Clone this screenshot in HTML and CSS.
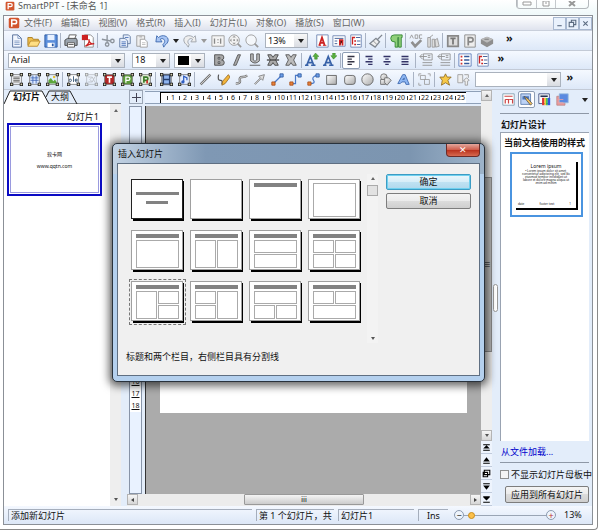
FILE: index.html
```
<!DOCTYPE html>
<html lang="zh-CN">
<head>
    <meta charset="UTF-8">
    <meta name="viewport" content="width=device-width, initial-scale=1.0">
    <title>SmartPPT - [未命名 1]</title>
    <link rel="stylesheet" href="styles.css">
</head>
<body>
    <svg class="sprite" aria-hidden="true">
        <defs>
            <linearGradient id="grey" x1="0" y1="0" x2="1" y2="1"><stop offset="0" stop-color="#fff"/><stop offset="1" stop-color="#aaa"/></linearGradient>
        </defs>
        <!-- window buttons -->
        <symbol id="win-min" viewBox="0 0 10 6"><path d="M1 1h8v3H1z" fill="#fff" stroke="#999"/></symbol>
        <symbol id="win-max" viewBox="0 0 10 6"><path d="M2 0h6v5H2zM4 2h2" fill="#fff" stroke="#999"/></symbol>
        <symbol id="win-close" viewBox="0 0 10 6"><path d="M2 0l6 5M8 0L2 5" stroke="#999" stroke-width="2"/></symbol>
        <symbol id="doc-min" viewBox="0 0 10 10"><path d="M3 7h4" stroke="#5b6b80"/></symbol>
        <symbol id="doc-max" viewBox="0 0 10 10"><path d="M4 4V2h4v4H6M2 4h4v4H2z" fill="none" stroke="#5b6b80"/></symbol>
        <symbol id="doc-close" viewBox="0 0 10 10"><path d="M3 3l4 4M7 3L3 7" stroke="#5b6b80"/></symbol>
        <!-- file toolbar -->
        <symbol id="logo" viewBox="0 0 16 16"><rect x="1" y="1" width="14" height="14" rx="2" fill="#d2552d"/><path d="M5 13V4h4a2.500 2.500 0 0 1 0 5H6" fill="none" stroke="#fff" stroke-width="2"/></symbol>
        <symbol id="new" viewBox="0 0 16 16"><path d="M3 1h6l4 4v10H3z" fill="#f4f8ff" stroke="#4a6490"/><path d="M9 1v4h4M5 8h6M5 10h6M5 12h6" fill="none" stroke="#7c96c0"/></symbol>
        <symbol id="open" viewBox="0 0 16 16"><path d="M1 13V4h5l1 2h6v2" fill="#f0c050" stroke="#a87a1c"/><path d="M1 14l3-6h11l-3 6z" fill="#ffdf85" stroke="#b8872a"/></symbol>
        <symbol id="save" viewBox="0 0 16 16"><path d="M1 1h14v14H1z" fill="#5b8fdc" stroke="#28569f"/><path d="M4 1h8v6H4z" fill="#e8f1ff"/><path d="M4 10h8v5H4z" fill="#fff"/><path d="M9 11h2v3H9z" fill="#28569f"/></symbol>
        <symbol id="print" viewBox="0 0 16 16"><path d="M5 6l1-5h8l-2 5" fill="#fff" stroke="#555"/><path d="M1 7l3-2h10l1 2v6H1z" fill="#9aa4ae" stroke="#444"/><path d="M4 10h8v5H4z" fill="#fff" stroke="#555"/><path d="M5 12h6" stroke="#555"/></symbol>
        <symbol id="pdf" viewBox="0 0 16 16"><path d="M4 1h7l3 3v11H4z" fill="#fff" stroke="#888"/><rect x="1" y="1" width="7" height="6" fill="#c22"/><path d="M5 14c3-2 5-5 4-8 0 4 3 6 6 5-4 0-7 1-10 3z" fill="none" stroke="#c22" stroke-width="1.500"/></symbol>
        <symbol id="cut" viewBox="0 0 16 16"><g fill="none" stroke="#8d949c" stroke-width="1.500"><path d="M7 1v9M1 6l10 2"/><circle cx="7" cy="12" r="2"/><circle cx="13" cy="8" r="2"/></g></symbol>
        <symbol id="copy" viewBox="0 0 16 16"><g fill="#e6eefb" stroke="#5f789f"><path d="M6 1h6l2 2v8H6z"/><path d="M2 5h6l3 3v7H2z"/></g><path d="M4 9h5M4 11h5M4 13h5M8 4h4" stroke="#4d74b8"/></symbol>
        <symbol id="paste" viewBox="0 0 16 16"><path d="M2 2h9v12H2z" fill="#eee" stroke="#999"/><path d="M5 1h3v3H5z" fill="#bbb"/><path d="M6 6h5l3 3v6H6z" fill="#fff" stroke="#999"/><path d="M8 10h4M8 12h4" stroke="#bbb"/></symbol>
        <symbol id="undo" viewBox="0 0 16 16"><path d="M1 9l1-7 2 2c4-4 12-2 11 4-1 4-4 4-5 7l-1-3c2-2 3-4 1-6-1-1-3-1-4 0l2 3z" fill="#a9c6f4" stroke="#3a66ac"/></symbol>
        <symbol id="redo" viewBox="0 0 16 16"><path d="M15 9l-1-7-2 2C8 0 0 2 1 8c1 4 4 4 5 7l1-3C5 10 5 8 7 6c1-1 3-1 4 0L9 9z" fill="#eee" stroke="#9aa0a8"/></symbol>
        <symbol id="one" viewBox="0 0 16 16"><path d="M1 2h14v12H1z" fill="#f4f4f4" stroke="#999"/><path d="M4 5v6M11 5v6M8 6v1M8 9v1" stroke="#888" stroke-width="1.500"/></symbol>
        <symbol id="fit" viewBox="0 0 16 16"><circle cx="7" cy="7" r="6" fill="#f2f2f2" stroke="#999"/><path d="M7 2l2 2H5zM7 12l2-2H5zM2 7l2-2v4zM12 7l-2-2v4z" fill="#999"/><path d="M6 6h2v2H6z" fill="#999"/><path d="M11 11l4 4" stroke="#999" stroke-width="2"/></symbol>
        <symbol id="zoom" viewBox="0 0 16 16"><circle cx="7" cy="7" r="6" fill="#f4f7fb" stroke="#999"/><path d="M11 11l4 4" stroke="#999" stroke-width="2"/></symbol>
        <symbol id="char" viewBox="0 0 16 16"><path d="M2 1h13v14H2z" fill="#fff" stroke="#6e86b4"/><path d="M4 13h3M9 13h4" stroke="#c22"/><path d="M5 13L8 4l3 9M6 10h5" fill="none" stroke="#c22" stroke-width="2"/></symbol>
        <symbol id="para" viewBox="0 0 16 16"><path d="M1 2h14v12H1z" fill="#fff" stroke="#6e86b4"/><path d="M3 5h10M3 8h3M3 11h3" stroke="#35538f"/><path d="M9 13V7h4M12 7v6M8 8h2" stroke="#c22" stroke-width="2"/></symbol>
        <symbol id="outline" viewBox="0 0 16 16"><path d="M2 1h12v14H2z" fill="#fff" stroke="#6e86b4"/><path d="M4 3v9M4 4h3M6 8h2M6 12h2" stroke="#c22" stroke-width="1.500"/><path d="M8 4h5M9 8h4M9 12h4" stroke="#35538f"/></symbol>
        <symbol id="brush" viewBox="0 0 16 16"><path d="M15 1l-5 5M8 5l4 4-5 6-6-4z" fill="#eee" stroke="#7f868e" stroke-width="1.500"/><path d="M5 8l4 4" stroke="#888"/></symbol>
        <symbol id="pilcrow" viewBox="0 0 16 16"><path d="M15 1H6a4 4 0 0 0 0 8h1v6h3V4h1v11h3V4h1z" fill="#8fd07a" stroke="#2f8430"/></symbol>
        <symbol id="spell" viewBox="0 0 16 16"><path d="M1 5l2-4 2 4M7 1v4h3V1H7M15 1h-3v4h3" fill="none" stroke="#999"/><path d="M3 9l4 5 7-7" fill="none" stroke="#8f8f8f" stroke-width="3"/></symbol>
        <symbol id="book" viewBox="0 0 16 16"><path d="M2 4h3v11H2zM7 6h3v9H7zM10 7l3-2 2 9-4 1zM4 4l4-3" fill="#ddd" stroke="#999"/></symbol>
        <symbol id="boxt" viewBox="0 0 16 16"><path d="M2 2h12v12H2z" fill="#ddd" stroke="#888" stroke-width="2"/><path d="M5 5h6M8 5v7" stroke="#777" stroke-width="2"/></symbol>
        <symbol id="boxp" viewBox="0 0 16 16"><path d="M2 1h12v14H2z" fill="#eee" stroke="#888"/><path d="M6 13V4h3a2 2 0 0 1 0 5H6" fill="none" stroke="#888" stroke-width="2"/></symbol>
        <symbol id="cube" viewBox="0 0 16 16"><path d="M1 6l7-3 7 3v5l-7 4-7-4z" fill="#8e8e8e"/><path d="M1 6l7 4 7-4-7-3z" fill="#bbb"/><path d="M5 6h5" stroke="#777"/></symbol>
        <!-- text toolbar -->
        <symbol id="bold" viewBox="0 0 16 16"><path d="M3 2h7a3 3 0 0 1 1 6 3 3 0 0 1 0 6H3zM7 5v2h2V5zM7 10v2h2v-2z" fill="#a8a8a8" stroke="#4c4c4c" fill-rule="evenodd"/></symbol>
        <symbol id="italic" viewBox="0 0 16 16"><path d="M9 2h3L7 14H4z" fill="#aaa" stroke="#555"/></symbol>
        <symbol id="under" viewBox="0 0 16 16"><path d="M3 1h3v7q2 3 4 0V1h3v8q-5 5-10 0zM2 14h12" fill="#bbb" stroke="#555"/></symbol>
        <symbol id="strike" viewBox="0 0 16 16"><path d="M2 2h4l2 3 2-3h4l-3 6 3 6h-4l-2-3-2 3H2l3-6z" fill="#aaa" stroke="#444"/><path d="M1 8h14" stroke="#444" stroke-width="1.500"/></symbol>
        <symbol id="shadow" viewBox="0 0 16 16"><path d="M2 2h4l2 3 2-3h4l-3 6 3 6h-4l-2-3-2 3H2l3-6z" fill="#bbb" stroke="#555"/></symbol>
        <symbol id="grow" viewBox="0 0 16 16"><path d="M2 14L6 4l4 10M4 11h5" fill="none" stroke="#3862a8" stroke-width="2"/><path d="M0 14h4M7 14h5" stroke="#3862a8" stroke-width="1.500"/><path d="M9 4l3-4 4 4h-2v3h-3V4z" fill="#58b03c" stroke="#2f7a20" stroke-width=".5"/></symbol>
        <symbol id="shrink" viewBox="0 0 16 16"><path d="M2 14L6 4l4 10M4 11h5" fill="none" stroke="#3862a8" stroke-width="2"/><path d="M0 14h4M7 14h5" stroke="#3862a8" stroke-width="1.500"/><path d="M9 3l3 4 4-4h-2V0h-3v3z" fill="#58b03c" stroke="#2f7a20" stroke-width=".5"/></symbol>
        <symbol id="left" viewBox="0 0 16 16"><path d="M4 4h8M4 7h5M4 10h8M4 13h5" stroke="#334" stroke-width="1.500"/></symbol>
        <symbol id="right" viewBox="0 0 16 16"><path d="M4 4h8M7 7h5M4 10h8M7 13h5" stroke="#336" stroke-width="1.500"/></symbol>
        <symbol id="center" viewBox="0 0 16 16"><path d="M4 4h8M6 7h4M4 10h8M6 13h4" stroke="#336" stroke-width="1.500"/></symbol>
        <symbol id="justify" viewBox="0 0 16 16"><path d="M4 4h8M4 7h8M4 10h8M4 13h8" stroke="#336" stroke-width="1.500"/></symbol>
        <symbol id="indent" viewBox="0 0 16 16"><path d="M5 1h10v7H5zM4 11h11M4 14h11M10 3h3M10 5h3M1 4h8M4 1L1 4l3 3" fill="none" stroke="#909090"/></symbol>
        <symbol id="list" viewBox="0 0 16 16"><path d="M1 1h14v14H1z" fill="#fff" stroke="#5b7cba"/><path d="M3 4h2M3 8h2M3 12h2" stroke="#c33" stroke-width="2"/><path d="M7 4h6M7 8h6M7 12h6" stroke="#345a9c" stroke-width="1.500"/></symbol>
        <!-- object toolbar -->
        <symbol id="handles" viewBox="0 0 16 16"><path d="M2 2h12v12H2z" fill="none" stroke="#777"/><path d="M0 0h4v4H0zM12 0h4v4h-4zM0 12h4v4H0zM12 12h4v4h-4z" fill="#1a1a1a"/><path d="M1 1h2v2H1zM13 1h2v2h-2zM1 13h2v2H1zM13 13h2v2h-2z" fill="#d6d0b0"/></symbol>
        <symbol id="obj-text" viewBox="0 0 16 16"><path d="M3 3h10v10H3z" fill="#fff"/><path d="M4 5h8M4 7h8M4 9h8M4 11h8" stroke="#444"/><use href="#handles"/></symbol>
        <symbol id="obj-table" viewBox="0 0 16 16"><path d="M3 3h10v10H3z" fill="#dce9ff"/><path d="M3 6h10M3 9h10M6 3v10M10 3v10" stroke="#3b62b4"/><use href="#handles"/></symbol>
        <symbol id="obj-pic" viewBox="0 0 16 16"><path d="M3 3h10v10H3z" fill="#dff0ff"/><path d="M3 13V9l3-3 3 4 2-2 2 3v2z" fill="#5da63c"/><circle cx="10" cy="5" r="1.500" fill="#e9c034"/><use href="#handles"/></symbol>
        <symbol id="obj-ole" viewBox="0 0 16 16"><path d="M2 2h12v12H2z" fill="#fff"/><circle cx="4" cy="9" r="1.500" fill="none" stroke="#246"/><path d="M8 4v7M10 9h3q-1-3-3-1 0 4 3 3" fill="none" stroke="#246"/><use href="#handles"/></symbol>
        <symbol id="obj-off" viewBox="0 0 16 16"><g opacity=".4"><path d="M4 5h5l-3 3 3 3H4M9 5l3 6M12 5l-3 6" fill="none" stroke="#777"/><use href="#handles"/></g></symbol>
        <symbol id="obj-t" viewBox="0 0 16 16"><path d="M2 2h12v12H2z" fill="#b32626"/><path d="M5 5h6M8 5v7" stroke="#fff" stroke-width="2"/><use href="#handles"/></symbol>
        <symbol id="obj-p" viewBox="0 0 16 16"><path d="M2 2h12v12H2z" fill="#5c9a3a"/><path d="M6 12V5h3a2 2 0 0 1 0 4H6" fill="none" stroke="#fff" stroke-width="1.500"/><use href="#handles"/></symbol>
        <symbol id="obj-f" viewBox="0 0 16 16"><path d="M2 2h12v12H2z" fill="#e5f1d8"/><path d="M6 12V5h3a2 2 0 0 1 0 4H6" fill="none" stroke="#397a28" stroke-width="2"/><path d="M10 9v4" stroke="#c22" stroke-width="2"/><use href="#handles"/></symbol>
        <symbol id="obj-film" viewBox="0 0 16 16"><path d="M3 1h10v14H3z" fill="#28406e"/><path d="M5 3h6v4H5zM5 9h6v4H5z" fill="#8fb4f0"/><use href="#handles"/></symbol>
        <symbol id="obj-note" viewBox="0 0 16 16"><path d="M2 2h12v12H2z" fill="#e4edff"/><path d="M7 11V4l4 2v3" fill="none" stroke="#2d5cc0" stroke-width="1.500"/><circle cx="6" cy="11" r="2" fill="#2d5cc0"/><use href="#handles"/></symbol>
        <symbol id="line" viewBox="0 0 16 16"><path d="M2 14L14 2" stroke="#777" stroke-width="3"/><path d="M2 14L14 2" stroke="#ddd"/></symbol>
        <symbol id="pencil" viewBox="0 0 16 16"><path d="M2 2q-2 8 3 7 2 0 1 5" fill="none" stroke="#555" stroke-width="1.500"/><path d="M14 2L7 10l-1 5 4-2 6-8z" fill="#f3b53a" stroke="#98681a"/></symbol>
        <symbol id="curve" viewBox="0 0 16 16"><path d="M1 13q6 0 5-4t3-4 6-2" fill="none" stroke="#777" stroke-width="3"/><path d="M1 13q6 0 5-4t3-4 6-2" fill="none" stroke="#ddd"/></symbol>
        <symbol id="arrow" viewBox="0 0 16 16"><path d="M2 13l7-7-2-2 7-2-2 7-2-2-7 7z" fill="#ddd" stroke="#777"/></symbol>
        <symbol id="conn" viewBox="0 0 16 16"><path d="M4 12l8-8" stroke="#4a7ac8" stroke-width="1.500"/><path d="M1 11h4v4H1z" fill="#e8823c" stroke="#a64c15"/><path d="M11 1h4v4h-4z" fill="#6fa0ea" stroke="#2c589e"/></symbol>
        <symbol id="conn2" viewBox="0 0 16 16"><path d="M4 13h4V3h4" fill="none" stroke="#4a7ac8" stroke-width="1.500"/><path d="M1 11h4v4H1z" fill="#e8823c" stroke="#a64c15"/><path d="M11 1h4v4h-4z" fill="#6fa0ea" stroke="#2c589e"/></symbol>
        <symbol id="conn3" viewBox="0 0 16 16"><path d="M4 13q7 0 4-4T12 3" fill="none" stroke="#4a7ac8" stroke-width="1.500"/><path d="M1 11h4v4H1z" fill="#e8823c" stroke="#a64c15"/><path d="M11 1h4v4h-4z" fill="#6fa0ea" stroke="#2c589e"/></symbol>
        <symbol id="rect" viewBox="0 0 16 16"><path d="M2 3h12v11H2z" fill="url(#grey)" stroke="#555"/></symbol>
        <symbol id="round" viewBox="0 0 16 16"><rect x="2" y="3" width="13" height="11" rx="3" fill="url(#grey)" stroke="#555"/></symbol>
        <symbol id="oval" viewBox="0 0 16 16"><circle cx="8" cy="8" r="7" fill="url(#grey)" stroke="#555"/></symbol>
        <symbol id="shapes" viewBox="0 0 16 16"><g fill="url(#grey)" stroke="#666"><circle cx="6" cy="5" r="4"/><path d="M2 8h6v6H2z"/><path d="M7 6h5l3 3-5 6-3-3z"/></g></symbol>
        <symbol id="art" viewBox="0 0 16 16"><path d="M1 13L7 2h3l5 12h-4l-1-3H6l-2 2zM7 8h2V6z" fill="#8db6f2" stroke="#3763ab" fill-rule="evenodd"/></symbol>
        <symbol id="group" viewBox="0 0 16 16"><path d="M3 3h6v5H3zM8 8h6v6H8zM1 1v3M1 1h3M12 1h3v3M1 12v3h3" fill="none" stroke="#999"/></symbol>
        <symbol id="star" viewBox="0 0 16 16"><path d="M8 1l2 4 5 0-4 4 2 6-5-3-5 3 1-6-3-4 5 0z" fill="#f7c948" stroke="#8b6720"/></symbol>
        <symbol id="trans" viewBox="0 0 16 16"><path d="M1 2h6v10H1zM9 2h5v4M9 8l3-2 3 3-2 1v5h-3v-5H8z" fill="#eee" stroke="#999"/></symbol>
        <!-- task pane -->
        <symbol id="pane-layout" viewBox="0 0 16 16"><path d="M1 1h14v14H1z" fill="#fff" stroke="#79a"/><path d="M3 4h10M4 8h4v5M4 8v5M9 8h4v5" fill="none" stroke="#c44" stroke-width="1.500"/></symbol>
        <symbol id="pane-design" viewBox="0 0 16 16"><path d="M1 1h12v13H1z" fill="#bcd2f5" stroke="#57a"/><path d="M3 4h8v4H3z" fill="#4774be"/><path d="M5 4l5 3 5 6-2 2-5-6z" fill="#f0c060" stroke="#555"/></symbol>
        <symbol id="pane-color" viewBox="0 0 16 16"><path d="M1 1h13v12H1z" fill="#fff" stroke="#347"/><path d="M3 4h9" stroke="#235" stroke-width="2"/><path d="M5 6h3v9H5z" fill="#d33"/><path d="M8 6h2v9H8z" fill="#ec3"/><path d="M10 6h2v9h-2z" fill="#3b4"/><path d="M12 6h3v9h-3z" fill="#35d"/></symbol>
        <symbol id="pane-effect" viewBox="0 0 16 16"><path d="M1 4h10v11H1z" fill="#e99" stroke="#b88"/><path d="M4 1h11v11H4z" fill="#5c8ae0" stroke="#9bd"/><path d="M2 8h7M2 12h7" stroke="#e9a0a8"/></symbol>
        <!-- page navigation -->
        <symbol id="first" viewBox="0 0 10 10"><path d="M2 2h6v1H2zM5 3l3 3H2zM2 7h6v1H2z"/></symbol>
        <symbol id="prev" viewBox="0 0 10 10"><path d="M5 2l3 4H2zM2 7h6v1H2z"/></symbol>
        <symbol id="pages" viewBox="0 0 10 10"><path d="M3 2h5v4H3zM2 4h4v4H2z" fill="#fff" stroke="#000"/></symbol>
        <symbol id="next" viewBox="0 0 10 10"><path d="M2 2h6v1H2zM2 4h6L5 8z"/></symbol>
        <symbol id="last" viewBox="0 0 10 10"><path d="M2 2h6v1H2zM2 3h6L5 6zM2 7h6v1H2z"/></symbol>
    </svg>

    <div class="frame">
        <header class="titlebar">
            <svg class="logo"><use href="#logo"/></svg>
            <span class="title">SmartPPT - [未命名 1]</span>
            <div class="window-btns"><button aria-label="最小化"><svg><use href="#win-min"/></svg></button><button aria-label="最大化"><svg><use href="#win-max"/></svg></button><button class="wide" aria-label="关闭"><svg><use href="#win-close"/></svg></button></div>
        </header>

        <div class="window">
            <nav class="menu">
                <svg class="logo"><use href="#logo"/></svg>
                <a href="#">文件(F)</a><a href="#">编辑(E)</a><a href="#">视图(V)</a><a href="#">格式(R)</a><a href="#">插入(I)</a><a href="#">幻灯片(L)</a><a href="#">对象(O)</a><a href="#">播放(S)</a><a href="#">窗口(W)</a>
                <div class="doc-btns"><button aria-label="最小化文档"><svg><use href="#doc-min"/></svg></button><button aria-label="还原文档"><svg><use href="#doc-max"/></svg></button><button aria-label="关闭文档"><svg><use href="#doc-close"/></svg></button></div>
            </nav>

            <div class="toolbar file-bar">
                <button><svg><use href="#new"/></svg></button><button><svg><use href="#open"/></svg></button><button><svg><use href="#save"/></svg></button>
                <i></i>
                <button><svg><use href="#print"/></svg></button><button><svg><use href="#pdf"/></svg></button>
                <i></i>
                <button><svg><use href="#cut"/></svg></button><button><svg><use href="#copy"/></svg></button><button><svg><use href="#paste"/></svg></button>
                <i class="blank"></i>
                <button><svg><use href="#undo"/></svg></button><button class="drop" aria-label="撤销列表"></button><button><svg><use href="#redo"/></svg></button><button class="drop off" aria-label="重做列表"></button>
                <button><svg><use href="#one"/></svg></button><button><svg><use href="#fit"/></svg></button><button><svg><use href="#zoom"/></svg></button>
                <span class="combo zoom-box"><select aria-label="缩放"><option>13%</option></select></span>
                <button><svg><use href="#char"/></svg></button><button><svg><use href="#para"/></svg></button><button><svg><use href="#outline"/></svg></button>
                <i></i>
                <button><svg><use href="#brush"/></svg></button>
                <i></i>
                <button><svg><use href="#pilcrow"/></svg></button>
                <i></i>
                <button><svg><use href="#spell"/></svg></button><button><svg><use href="#book"/></svg></button>
                <i></i>
                <button><svg><use href="#boxt"/></svg></button><button><svg><use href="#boxp"/></svg></button><button><svg><use href="#cube"/></svg></button>
                <button class="more">»</button>
            </div>

            <div class="toolbar text-bar">
                <span class="combo font-box"><select aria-label="字体"><option>Arial</option></select></span>
                <span class="combo size-box"><select aria-label="字号"><option>18</option></select></span>
                <span class="combo color-box"><select aria-label="颜色"><option></option></select></span>
                <button><svg><use href="#bold"/></svg></button><button><svg><use href="#italic"/></svg></button><button><svg><use href="#under"/></svg></button><button><svg><use href="#strike"/></svg></button><button><svg><use href="#shadow"/></svg></button>
                <i></i>
                <button><svg><use href="#grow"/></svg></button><button><svg><use href="#shrink"/></svg></button>
                <i></i>
                <button class="on"><svg><use href="#left"/></svg></button><button><svg><use href="#right"/></svg></button><button><svg><use href="#center"/></svg></button><button><svg><use href="#justify"/></svg></button>
                <i></i>
                <button><svg><use href="#indent"/></svg></button><button><svg><use href="#indent"/></svg></button>
                <i></i>
                <button><svg><use href="#list"/></svg></button><button><svg><use href="#outline"/></svg></button>
                <button class="more">»</button>
            </div>

            <div class="toolbar object-bar">
                <button><svg><use href="#obj-text"/></svg></button><button><svg><use href="#obj-table"/></svg></button><button><svg><use href="#obj-pic"/></svg></button>
                <i></i>
                <button><svg><use href="#obj-ole"/></svg></button><button><svg><use href="#obj-off"/></svg></button><button><svg><use href="#obj-t"/></svg></button><button><svg><use href="#obj-p"/></svg></button><button><svg><use href="#obj-f"/></svg></button>
                <i></i>
                <button><svg><use href="#obj-film"/></svg></button><button><svg><use href="#obj-note"/></svg></button>
                <i></i>
                <button><svg><use href="#line"/></svg></button><button><svg><use href="#pencil"/></svg></button><button><svg><use href="#curve"/></svg></button><button><svg><use href="#arrow"/></svg></button><button><svg><use href="#conn"/></svg></button><button><svg><use href="#conn2"/></svg></button><button><svg><use href="#conn3"/></svg></button><button><svg><use href="#rect"/></svg></button><button><svg><use href="#round"/></svg></button><button><svg><use href="#oval"/></svg></button><button><svg><use href="#shapes"/></svg></button><button><svg><use href="#art"/></svg></button>
                <i></i>
                <button><svg><use href="#group"/></svg></button>
                <i></i>
                <button><svg><use href="#star"/></svg></button><button><svg><use href="#trans"/></svg></button>
                <span class="combo anim-box"><select aria-label="动画"><option></option></select></span>
                <button class="more">»</button>
            </div>

            <main class="main">
                <aside class="slides">
                    <div class="tabs">
                        <svg viewBox="0 0 117 14" preserveAspectRatio="xMinYMin meet"><path d="M0 14L6 1h32l7 13z" fill="#fff"/><path d="M0 14L6 1h32l7 13H117M42 7l3-6h21l7 13" fill="none" stroke="#222"/></svg>
                        <button class="tab active">幻灯片</button><button class="tab">大纲</button>
                    </div>
                    <div class="slide-list">
                        <div class="slide-items">
                            <div class="slide-name">幻灯片1</div>
                            <div class="slide-thumb"><p>软卡网</p><p>www.qqtn.com</p></div>
                        </div>
                        <div class="vscroll flat"><span class="up"></span><span class="down"></span></div>
                    </div>
                </aside>

                <section class="editor">
                    <div class="corner"></div>
                    <div class="hruler"><div class="numbers" id="hnumbers"></div></div>
                    <div class="vruler"><div class="numbers" id="vnumbers"></div></div>
                    <div class="canvas"><div class="page"></div></div>
                    <div class="side">
                        <div class="vscroll"><button class="up" aria-label="向上"></button><div class="track"><span class="thumb">≡</span></div><button class="down" aria-label="向下"></button></div>
                        <div class="nav">
                            <button><svg><use href="#first"/></svg></button><button><svg><use href="#prev"/></svg></button><button><svg><use href="#pages"/></svg></button><button><svg><use href="#next"/></svg></button><button><svg><use href="#last"/></svg></button>
                        </div>
                    </div>
                    <div class="hscroll"><button class="back" aria-label="向左"></button><div class="track"><span class="thumb">ⅲ</span></div><button class="forward" aria-label="向右"></button></div>
                </section>

                <div class="splitter"><span></span></div>

                <aside class="pane">
                    <div class="pane-icons">
                        <button><svg><use href="#pane-layout"/></svg></button><button class="on"><svg><use href="#pane-design"/></svg></button><button><svg><use href="#pane-color"/></svg></button><button><svg><use href="#pane-effect"/></svg></button>
                        <button class="drop" aria-label="更多"></button>
                    </div>
                    <h2>幻灯片设计</h2>
                    <div class="styles-box">
                        <h3>当前文档使用的样式</h3>
                        <div class="style-thumb">
                            <div class="sheet">
                                <b>Lorem ipsum</b>
                                <p>• Lorem ipsum dolor sit amet, consectetur adipiscing elit, sed do eiusmod tempor incididunt ut labore et dolore magna aliqua ut enim ad minim</p>
                                <footer><span>date</span><span>footer text</span><span>1</span></footer>
                            </div>
                        </div>
                    </div>
                    <a class="load" href="#">从文件加载...</a>
                    <div class="check"><input type="checkbox" id="hideBg"><label for="hideBg">不显示幻灯片母板中的</label></div>
                    <button class="apply">应用到所有幻灯片</button>
                </aside>
            </main>

            <footer class="status">
                <span class="cell hint">添加新幻灯片</span>
                <span class="cell count">第 1 个幻灯片，共</span>
                <span class="cell name">幻灯片1</span>
                <span class="cell ins">Ins</span>
                <div class="zoom">
                    <button aria-label="缩小">−</button>
                    <input type="range" aria-label="缩放比例" min="0" max="100" value="5">
                    <button class="plus" aria-label="放大">+</button>
                </div>
                <span class="percent">13%</span>
            </footer>
        </div>
    </div>

    <div class="dialog" role="dialog" aria-labelledby="dialogTitle">
        <div class="dialog-title"><span id="dialogTitle">插入幻灯片</span><button class="close" aria-label="关闭">✕</button></div>
        <div class="dialog-body">
            <div class="layouts" id="layouts"></div>
            <div class="vscroll dialog-scroll"><span class="up"></span><span class="thumb"></span><span class="down"></span></div>
            <div class="actions">
                <button class="ok">确定</button>
                <button>取消</button>
            </div>
            <p class="desc">标题和两个栏目，右侧栏目具有分割线</p>
        </div>
    </div>

    <script src="script.js"></script>
</body>
</html>
```
FILE: script.js
```
// title bar and the placeholder boxes of a layout: [x, y, width, height]
const TITLE = [5, 4, 43, 4];
const FULL = [5, 10, 42, 27];
const L = [5, 10, 20, 27], R = [27, 10, 20, 27];
const T = [5, 10, 42, 12], B = [5, 24, 42, 13];
const TL = [5, 10, 20, 12], TR = [27, 10, 20, 12];
const BL = [5, 24, 20, 13], BR = [27, 24, 20, 13];

const layouts = [
    { bars: [[5, 13, 43, 3], [15, 22, 22, 3]], boxes: [], dark: true },
    { bars: [], boxes: [] },
    { bars: [TITLE], boxes: [] },
    { bars: [], boxes: [[5, 4, 42, 33]] },
    { bars: [TITLE], boxes: [FULL] },
    { bars: [TITLE], boxes: [L, R] },
    { bars: [TITLE], boxes: [T, B] },
    { bars: [TITLE], boxes: [TL, TR, BL, BR] },
    { bars: [TITLE], boxes: [L, TR, BR], selected: true },
    { bars: [TITLE], boxes: [TL, BL, R] },
    { bars: [TITLE], boxes: [T, BL, BR] },
    { bars: [TITLE], boxes: [TL, TR, B] }
];

function rect(r, cls) {
    return `<rect class="${cls}" x="${r[0]}" y="${r[1]}" width="${r[2]}" height="${r[3]}"/>`;
}

document.getElementById('layouts').innerHTML = layouts.map((item, i) => `
    <button class="layout ${item.selected ? 'selected' : ''}" aria-label="版式 ${i + 1}">
        <svg viewBox="0 0 53 42">
            ${rect([2, 2, 51, 40], 'shade')}
            ${rect([0, 0, 52, 40], item.dark ? 'edge dark' : 'edge')}
            ${rect([1, 1, 50, 38], 'paper')}
            ${item.bars.map(r => rect(r, 'bar')).join('')}
            <g transform="translate(.5 .5)">${item.boxes.map(r => rect(r, 'box')).join('')}</g>
        </svg>
    </button>`).join('');

function numbers(id, count) {
    let html = '';
    for (let i = 1; i <= count; i++) html += `<span>${i}</span>`;
    document.getElementById(id).innerHTML = html;
}

numbers('hnumbers', 25);
numbers('vnumbers', 18);
```
FILE: styles.css
```
* {
    box-sizing: border-box;
}
body {
    margin: 0;
    position: relative;
    background: #fff;
    color: #111;
    font: 9px/12px "Noto Sans", "Noto Sans CJK SC", sans-serif;
    overflow: hidden;
}
button, select, input {
    font: inherit;
    color: inherit;
    margin: 0;
    padding: 0;
}
button {
    border: 0;
    background: none;
}
h2, h3, p {
    margin: 0;
    font-size: 9px;
}
.sprite {
    position: absolute;
    width: 0;
    height: 0;
}
.frame {
    display: flex;
    flex-direction: column;
    min-height: calc(100vh - 1px);
    margin-right: 3px;
    padding: 0 4px 4px 3px;
    border: solid #8a8a8a;
    border-width: 0 1px 1px 0;
    border-radius: 0 0 4px 0;
    background: linear-gradient(#fff, #f0f9fa 14px, #fff 60px);
}

/* title bar */
.titlebar {
    display: flex;
    align-items: center;
    height: 15px;
    padding: 0 4px 3px 2px;
    color: #555;
    font-size: 9px;
}
.titlebar .logo {
    width: 10px;
    height: 10px;
    margin-right: 3px;
}
.window-btns {
    display: flex;
    align-self: flex-start;
    margin: 0 0 0 auto;
    border: solid #b4b8bc;
    border-width: 0 1px 1px;
    border-radius: 0 0 4px 4px;
}
.window-btns button {
    display: flex;
    align-items: center;
    justify-content: center;
    width: 19px;
    height: 8px;
    border-left: 1px solid #c4c8cc;
}
.window-btns svg {
    width: 10px;
    height: 6px;
}
.window-btns .wide {
    width: 33px;
}
.window {
    flex: 1;
    display: flex;
    flex-direction: column;
    border: 1px solid #8b9097;
    background: #e3edfa;
    overflow: hidden;
}
.menu {
    display: flex;
    align-items: center;
    gap: 9px;
    height: 15px;
    padding-left: 4px;
    background: linear-gradient(#fff, #dfe3ee);
    border-bottom: 1px solid #c9cfdb;
}
.menu .logo {
    width: 12px;
    height: 12px;
    margin-right: -5px;
}
.menu a {
    color: #666;
    text-decoration: none;
    white-space: nowrap;
}
.doc-btns {
    display: flex;
    margin-left: auto;
}
.doc-btns button {
    width: 13px;
    height: 13px;
    border: 1px solid #a8b8d0;
    background: #e9f1fc;
}
.doc-btns svg {
    display: block;
    width: 11px;
    height: 11px;
}

/* toolbars */
.toolbar {
    display: flex;
    align-items: center;
    flex: none;
    height: 20px;
    padding-left: 4px;
    background: linear-gradient(#f5f9ff, #dde8f8);
    border-bottom: 1px solid #c3cad6;
}
.text-bar {
    height: 19px;
}
.object-bar {
    padding-left: 3px;
}
.toolbar button {
    display: flex;
    align-items: center;
    justify-content: center;
    width: 18px;
    height: 17px;
    flex: none;
}
.file-bar button {
    width: 17px;
}
.toolbar svg {
    flex: none;
    width: 14px;
    height: 14px;
}
.object-bar svg {
    width: 13px;
    height: 13px;
}
.toolbar i {
    width: 1px;
    height: 15px;
    margin: 0 1px;
    background: #a9b3c4;
}
.toolbar i.blank {
    background: none;
}
.toolbar .on, .pane-icons .on {
    border: 1px solid #8d9db4;
    border-radius: 2px;
    background: #fff;
}
.toolbar .drop {
    width: 11px;
}
.drop::after, .combo::after {
    content: "";
    border: 3px solid transparent;
    border-top: 4px solid #222;
    border-bottom: 0;
}
.drop.off::after {
    border-top-color: #999;
}
.toolbar .more {
    font-size: 11px;
    font-weight: bold;
    padding-bottom: 5px;
}
.file-bar .more {
    margin-left: 6px;
}
.combo {
    position: relative;
    height: 15px;
}
.combo::after {
    position: absolute;
    right: 4px;
    top: 6px;
    pointer-events: none;
}
.combo select {
    appearance: none;
    display: block;
    width: 100%;
    height: 15px;
    padding: 0 2px;
    border: 1px solid #aab2bd;
    border-radius: 0;
    background: linear-gradient(#f8f8f8, #d9dce2) right / 13px 100% no-repeat #fff;
}
.zoom-box {
    width: 43px;
    margin: 0 5px;
}
.font-box {
    width: 117px;
    margin-right: 7px;
}
.size-box {
    width: 38px;
    margin-right: 4px;
}
.color-box {
    width: 31px;
    margin-right: 5px;
}
.color-box::before {
    content: "";
    position: absolute;
    left: 4px;
    top: 3px;
    width: 11px;
    height: 9px;
    background: #000;
}
.anim-box {
    width: 86px;
    margin-left: 3px;
}

/* main area */
.main {
    flex: 1;
    display: grid;
    grid-template-columns: 123px minmax(0, 1fr) 8px 92px;
}
.slides {
    display: flex;
    flex-direction: column;
    padding-right: 6px;
}
.tabs {
    position: relative;
    display: flex;
    gap: 11px;
    height: 14px;
    padding-left: 9px;
}
.tabs svg {
    position: absolute;
    left: 0;
    top: 0;
    width: 117px;
    height: 14px;
}
.tab {
    position: relative;
    height: 14px;
}
.tab.active {
    font-weight: bold;
}
.slide-list {
    flex: 1;
    display: flex;
    background: #fff;
}
.slide-items {
    flex: 1;
    padding: 7px 8px 0 3px;
}
.slide-name {
    text-align: right;
    padding-right: 3px;
}
.slide-thumb {
    display: flex;
    flex-direction: column;
    justify-content: center;
    height: 73px;
    border: 2px solid #0b0bc4;
    outline: 1px solid #9a9adf;
    outline-offset: -4px;
    text-align: center;
}
.slide-thumb p {
    font-size: 5px;
}
.vscroll {
    display: flex;
    flex-direction: column;
    align-items: center;
    width: 11px;
    background: #eee;
}
.flat {
    justify-content: space-between;
    padding: 5px 0;
}
.up::after, .down::after, .back::after, .forward::after {
    content: "";
    display: block;
    width: 0;
    margin: auto;
    border: 2px solid transparent;
}
.up::after {
    border-bottom: 3px solid #666;
    border-top: 0;
}
.down::after {
    border-top: 3px solid #555;
    border-bottom: 0;
}
.back::after {
    border-right: 3px solid #444;
    border-left: 0;
}
.forward::after {
    border-left: 3px solid #444;
    border-right: 0;
}
.editor {
    display: grid;
    grid-template: 16px minmax(0, 1fr) 12px / 18px minmax(0, 1fr) 11px;
}
.corner {
    width: 14px;
    height: 14px;
    margin-left: 2px;
    border: 1px solid #9aa5b5;
    background: linear-gradient(#445, #445) center / 9px 1px no-repeat, linear-gradient(#445, #445) center / 1px 9px no-repeat, #e3edfa;
}
.hruler {
    height: 13px;
    margin-top: 1px;
    padding: 0 15px;
    border: solid #8ea0b8;
    border-width: 1px 0;
    background: #e9f2ff;
    overflow: hidden;
}
.hruler .numbers {
    display: flex;
    height: 11px;
    padding-left: 6px;
    border-left: 1px solid #000;
    border-top: 1px solid #000;
    background: #fff;
    font-size: 7px;
    line-height: 10px;
}
.hruler span {
    position: relative;
    width: 12px;
    flex: none;
    text-align: center;
}
.hruler span::before {
    content: "";
    position: absolute;
    left: 0;
    top: 3px;
    width: 1px;
    height: 4px;
    background: #333;
}
.vruler {
    display: flex;
    flex-direction: column;
    justify-content: center;
    width: 13px;
    margin-left: 2px;
    border: 1px solid #8794a8;
    background: #e9f2ff;
}
.vruler .numbers {
    margin-top: -4px;
    padding-top: 12px;
    background: #fff;
    font-size: 7px;
    text-align: center;
}
.vruler span {
    display: block;
    height: 12px;
    line-height: 12px;
    text-decoration: underline;
}
.canvas {
    display: flex;
    align-items: center;
    background: #ababab;
    border-left: 1px solid #333;
}
.page {
    flex: 1;
    margin: 0 14px 4px;
    aspect-ratio: 4 / 3;
    background: #fff;
}
.side {
    grid-area: 1 / 3 / 4 / 4;
    display: flex;
    flex-direction: column;
}
.side .vscroll {
    flex: 1;
}
.side .track {
    flex: 1;
    padding-top: 76px;
}
.side .thumb {
    display: flex;
    align-items: center;
    justify-content: center;
    width: 11px;
    height: 175px;
    border: 1px solid #8c8c8c;
    background: #bbb;
}
.vscroll button, .hscroll button {
    width: 11px;
    height: 11px;
    border: 1px solid #b4b4b4;
    background: linear-gradient(#f6f6f6, #d6d6d6);
}
.nav button {
    display: block;
    width: 11px;
    height: 13px;
    border-bottom: 1px solid #c0cbdc;
    background: #eef4fd;
}
.nav svg {
    display: block;
    width: 11px;
    height: 11px;
}
.hscroll {
    grid-area: 3 / 1 / 4 / 3;
    display: flex;
    background: #ececec;
}
.hscroll .track {
    flex: 1;
    display: flex;
    justify-content: center;
}
.hscroll .thumb {
    width: 36%;
    height: 11px;
    border: 1px solid #999;
    border-radius: 1px;
    background: linear-gradient(#f4f4f4, #ccc);
    font-size: 7px;
    line-height: 9px;
    text-align: center;
}
.splitter {
    display: flex;
    align-items: center;
    padding-left: 1px;
}
.splitter span {
    width: 5px;
    height: 28px;
    border: 1px solid #999;
    border-radius: 3px;
    background: #fff;
}

/* task pane */
.pane {
    display: flex;
    flex-direction: column;
    overflow: hidden;
}
.pane-icons {
    display: flex;
    gap: 1px;
    height: 24px;
    padding-top: 1px;
    border-bottom: 1px solid #8e98a6;
    margin-right: 3px;
}
.pane-icons button {
    display: flex;
    align-items: center;
    justify-content: center;
    width: 17px;
    height: 17px;
}
.pane-icons svg {
    flex: none;
    width: 13px;
    height: 13px;
}
.pane-icons .drop {
    width: 9px;
    margin-left: auto;
}
.pane h2 {
    padding: 5px 0 1px 1px;
}
.styles-box {
    flex: 1;
    margin-right: 3px;
    border-left: 1px solid #99a3b2;
    border-top: 1px solid #99a3b2;
    background: #fff;
}
.styles-box h3 {
    padding: 4px 0 3px 3px;
    white-space: nowrap;
}
.style-thumb {
    height: 65px;
    margin: 0 6px 0 9px;
    padding: 8px 3px 6px 4px;
    border: 2px solid #4a94e0;
}
.sheet {
    display: flex;
    flex-direction: column;
    height: 48px;
    border: solid #000;
    border-width: 0 2px 2px 0;
    text-align: center;
    font-size: 3px;
    line-height: 3px;
}
.sheet b {
    font-size: 5px;
    line-height: 8px;
    font-weight: normal;
}
.sheet p {
    padding: 0 5px;
    font-size: 3px;
    line-height: 3px;
}
.sheet footer {
    display: flex;
    justify-content: space-between;
    margin-top: auto;
    padding: 0 5px 2px 2px;
}
.load {
    padding: 5px 0 4px 1px;
    margin-right: 3px;
    border-bottom: 1px solid #8e98a6;
    color: #00c;
    text-decoration: none;
}
.check {
    display: flex;
    align-items: center;
    gap: 2px;
    height: 23px;
    white-space: nowrap;
}
.check input {
    appearance: none;
    flex: none;
    width: 9px;
    height: 9px;
    border: 1px solid #8e8f8f;
    background: #f4f4f4;
}
.apply {
    height: 17px;
    margin: 0 3px 3px 5px;
}
.apply, .actions button {
    border: 1px solid #7d7d7d;
    border-radius: 2px;
    background: linear-gradient(#f4f4f4, #ebebeb 50%, #dcdcdc 50%, #cfcfcf);
}

/* status bar */
.status {
    display: flex;
    align-items: center;
    gap: 4px;
    height: 18px;
    padding-left: 4px;
    background: linear-gradient(#f4f8ff, #dce7f7);
}
.cell {
    height: 12px;
    padding-left: 2px;
    border-left: 1px solid #a5aebc;
    border-top: 1px solid #a5aebc;
    line-height: 11px;
    white-space: nowrap;
    overflow: hidden;
}
.hint {
    flex: 1;
}
.count {
    width: 78px;
}
.name {
    width: 76px;
}
.ins {
    width: 30px;
    padding-left: 8px;
}
.zoom {
    display: flex;
    align-items: center;
    width: 104px;
    padding-left: 2px;
}
.zoom button {
    flex: none;
    width: 10px;
    height: 10px;
    border: 1px solid #8b9ab0;
    border-radius: 50%;
    background: #eef4fc;
    line-height: 7px;
}
.zoom .plus {
    color: #b33;
}
.zoom input {
    appearance: none;
    flex: 1;
    width: 0;
    height: 7px;
    background: linear-gradient(#9aa5b5, #9aa5b5) center / 100% 1px no-repeat;
}
.zoom input::-webkit-slider-thumb {
    appearance: none;
    width: 7px;
    height: 7px;
    border: 1px solid #c98c1c;
    border-radius: 50%;
    background: #fcc04a;
}
.percent {
    width: 32px;
    padding-left: 4px;
}

/* insert slide dialog */
.dialog {
    position: absolute;
    left: 112px;
    top: 143px;
    width: 373px;
    padding: 0 4px 5px;
    border: 1px solid #29323c;
    border-radius: 5px;
    background: linear-gradient(90deg, #c3d3e4, #7f98b4 25%, #7c95b0 80%, #9db3c9) top / 100% 30px no-repeat, #b4d0ee;
    box-shadow: 0 1px 8px 3px rgba(0, 0, 0, .6);
}
.dialog-title {
    display: flex;
    justify-content: space-between;
    height: 19px;
    padding-left: 1px;
    line-height: 19px;
}
.close {
    width: 34px;
    height: 13px;
    border: 1px solid #6c2b28;
    border-top: 0;
    border-radius: 0 0 4px 4px;
    background: linear-gradient(#e2a79d, #cf5a48 50%, #b8301c 50%, #d76a50);
    color: #fff;
    font-size: 9px;
    line-height: 12px;
}
.dialog-body {
    display: grid;
    grid-template-columns: 229px 12px 85px;
    column-gap: 7px;
    padding: 10px 0 11px 13px;
    border: 1px solid #5f6f82;
    background: #f0f0f0;
}
.layouts {
    display: grid;
    grid-template-columns: repeat(4, 53px);
    grid-auto-rows: 42px;
    gap: 9px 6px;
    padding-top: 5px;
}
.layout {
    height: 42px;
}
.layout svg {
    display: block;
    width: 53px;
    height: 42px;
}
.layout.selected {
    outline: 1px dashed #777;
    outline-offset: 1px;
}
.shade {
    fill: #000;
}
.edge {
    fill: #a0a0a0;
}
.dark {
    fill: #222;
}
.paper {
    fill: #fff;
}
.bar {
    fill: #828282;
}
.box {
    fill: #fff;
    stroke: #aaa;
}
.dialog-scroll {
    height: 169px;
    padding: 3px 0;
    background: #f3f3f3;
}
.dialog-scroll .thumb {
    width: 11px;
    height: 11px;
    margin: 5px 0 auto;
    border: 1px solid #aaa;
    background: #e2e2e2;
}
.actions {
    display: flex;
    flex-direction: column;
    gap: 3px;
}
.actions button {
    height: 16px;
}
.actions .ok {
    border-color: #3c9cc4;
    background: linear-gradient(#eaf6fb, #d6edf8 50%, #bfe2f3 50%, #b0d8ec);
    box-shadow: inset 0 0 0 1px #6fd0ef;
}
.desc {
    grid-column: 1 / -1;
    margin: 8px 0 1px -5px;
}
```
